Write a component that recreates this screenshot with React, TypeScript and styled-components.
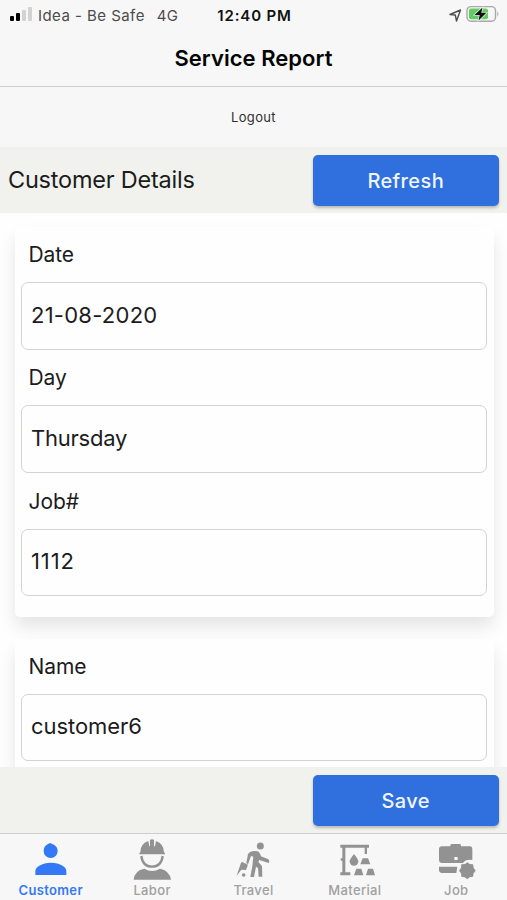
import React from "react";
import styled, { createGlobalStyle } from "styled-components";

const GlobalStyle = createGlobalStyle`
  * { box-sizing: border-box; }
  body { margin: 0; background: #fefefe; font-family: Inter, "Liberation Sans", sans-serif; color: #1c1c1c; }
`;

const Screen = styled.div`
  width: 100%;
  height: 900px;
  display: flex;
  flex-direction: column;
  overflow: hidden;
`;

const StatusBar = styled.div`
  height: 30px;
  display: grid;
  grid-template-columns: 1fr auto 1fr;
  align-items: center;
  padding: 0 8px 0 9px;
  font-size: 15px;
`;

const Carrier = styled.div`
  display: flex;
  align-items: center;
  color: #4c4c4c;
  letter-spacing: 0.45px;
  white-space: pre;
`;

const Signal = styled.svg`
  width: 24px;
  height: 14px;
  margin: -2px 5px 0 0;
`;

const Network = styled.span`
  margin-left: 12px;
  letter-spacing: 0.2px;
`;

const Clock = styled.div`
  padding-left: 1px;
  color: #111;
  font-weight: 600;
  letter-spacing: 0.85px;
`;

const Indicators = styled.div`
  display: flex;
  justify-content: flex-end;
  align-items: center;

  svg {
    margin: -2px -1px 0 0;
  }
`;

const Header = styled.header`
  flex: none;
  height: 87px;
  background: #f7f7f7;
  border-bottom: 1px solid #cfcfcf;
`;

const Title = styled.h1`
  margin: 0;
  height: 56px;
  line-height: 56px;
  text-align: center;
  font-size: 22px;
  font-weight: 600;
  letter-spacing: 0.04px;
  color: #050505;
`;

const LogoutBar = styled.div`
  flex: none;
  height: 60px;
  line-height: 60px;
  text-align: center;
  font-size: 13px;
  letter-spacing: 0.35px;
  background: #f7f7f7;
  color: #303030;
`;

const ActionBar = styled.div`
  flex: none;
  height: 66px;
  display: flex;
  align-items: center;
  justify-content: space-between;
  padding: 0 8px;
  background: #f1f2ed;
`;

const SectionTitle = styled.h2`
  margin: 0;
  font-size: 23.5px;
  line-height: 28px;
  padding-bottom: 1px;
  font-weight: 400;
  letter-spacing: -0.22px;
`;

const Button = styled.button`
  width: 186.5px;
  height: 51px;
  margin-top: 1px;
  margin-left: auto;
  padding: 0;
  border: 0;
  border-radius: 5px;
  background: #2f6fde;
  color: #f0f6ff;
  font: 500 20px Inter, sans-serif;
  letter-spacing: 0.4px;
  box-shadow: 0 2px 3px rgba(0, 0, 0, 0.24);
`;

const Content = styled.main`
  flex: none;
  height: 554px;
  overflow: hidden;
  padding: 14px 13.5px 0 14.5px;
  background: #fefefe;
`;

const Card = styled.section`
  padding: 7px 6.5px 21px;
  margin-bottom: 21.5px;
  border-radius: 5px;
  background: #fefefe;
  box-shadow: 0 10px 18px -1px rgba(0, 0, 0, 0.11);
`;

const Label = styled.label`
  display: block;
  height: 48px;
  padding: 0 7.5px;
  line-height: 41px;
  font-size: 21px;
  letter-spacing: -0.1px;
`;

const Input = styled.input<{ $tracking?: number }>`
  display: block;
  width: 100%;
  height: 67.5px;
  margin-bottom: 7.8px;
  padding: 0 9px 2px;
  border: 1.5px solid #d3d3d3;
  border-radius: 7px;
  background: transparent;
  outline: none;
  color: #1c1c1c;
  font: 400 22px Inter, sans-serif;
  letter-spacing: ${(p) => p.$tracking ?? 0}px;
  &:last-child { margin-bottom: 0; }
`;

const TabBar = styled.nav`
  flex: none;
  height: 67px;
  display: grid;
  grid-template-columns: repeat(5, 1fr);
  border-top: 1px solid #cecece;
  background: #f7f7f7;
`;

const Tab = styled.div<{ $active?: boolean }>`
  display: flex;
  flex-direction: column;
  align-items: center;
  padding-top: 4px;
  color: ${(p) => (p.$active ? "#3478f6" : "#929292")};
`;

const TabIcon = styled.svg`
  width: 40px;
  height: 43px;
  fill: currentColor;
`;

const TabLabel = styled.span<{ $active?: boolean }>`
  line-height: 18px;
  font-size: 13px;
  font-weight: ${(p) => (p.$active ? 600 : 500)};
  letter-spacing: 0.35px;
  color: ${(p) => (p.$active ? "#3478f6" : "#a0a0a0")};
`;

const Field = ({ label, value, tracking }: { label: string; value: string; tracking?: number }) => (
  <>
    <Label>{label}</Label>
    <Input aria-label={label} defaultValue={value} $tracking={tracking} />
  </>
);

const line = { fill: "none", stroke: "currentColor" } as const;

const tabs = [
  {
    label: "Customer",
    active: true,
    icon: (
      <>
        <path d="M57 15L66 19Q80 25 80 39A21 21 0 0 1 38 39Q38 24 51 18Z" />
        <path d="M13 111V99Q13 90 25 83Q40 74 60 74Q80 74 95 83Q106 90 106 99V111Z" />
      </>
    ),
  },
  {
    label: "Labor",
    icon: (
      <>
        <path d="M22 49Q20 46 25 43Q24 18 49 9L52 25H54V5Q60 2 66 5V25H69L72 9Q96 18 96 43Q101 46 99 49Z" />
        <path d="M28 54Q32 86 60 86Q88 86 92 54" {...line} strokeWidth="7" />
        <path d="M5 125Q8 97 37 92Q60 106 84 92Q112 97 117 125Z" />
      </>
    ),
  },
  {
    label: "Travel",
    icon: (
      <>
        <circle cx="82" cy="24" r="10.5" />
        <path d="M51 42Q62 37 73 40Q80 42 84 55L106 64Q111 69 107 75L79 66L76 72L87 84L88 116H77L75 90L69 86L63 117H52L58 84L61 56L54 54L45 79L40 75L45 48Z" />
        <path d="M11 113L24 74L28 72L45 80L39 96L25 95Z" />
        <circle cx="32" cy="111" r="5.5" />
      </>
    ),
  },
  {
    label: "Material",
    icon: (
      <>
        <path d="M16 20H102V29H96V48H89V29H31V103H46V112H16V103H22V68H17V61H22V29H16Z" />
        <path d="M57 48Q70 64 70 70A13 13 0 0 1 44 70Q44 64 57 48Z" />
        <path d="M83 61H99L106 79H76ZM64 92H79L85 112H57ZM99 92H114L120 112H93Z" />
      </>
    ),
  },
  {
    label: "Job",
    icon: (
      <>
        <path fillRule="evenodd" d="M43 25V22Q43 18 48 18H70Q75 18 75 22V25H103Q109 26 109 33V66Q90 62 81 75H16Q9 74 9 66V32Q9 26 16 25ZM55 57V66H65V57Z" />
        <path d="M9 86H64L61 105H16Q9 104 9 97Z" />
        <path d="M94 73L101 78L111 79L113 89L119 98L113 106L111 116L101 118L94 124L86 118L76 116L75 106L69 98L75 89L76 79L87 78Z" />
      </>
    ),
  },
];

export default function App() {
  return (
    <Screen>
      <GlobalStyle />
      <Header>
        <StatusBar>
          <Carrier>
            <Signal viewBox="0 0 24 14">
              <rect x="1" y="9" width="4" height="5" rx="1" />
              <rect x="7" y="6" width="4" height="8" rx="1" />
              <rect x="13" y="3" width="4" height="11" rx="1" fill="#d2d2d2" />
              <rect x="19" y="0" width="4" height="14" rx="1" fill="#d2d2d2" />
            </Signal>
            Idea - Be Safe<Network>4G</Network>
          </Carrier>
          <Clock>12:40 PM</Clock>
          <Indicators>
            <svg width="52" height="18" viewBox="0 0 52 18">
              <path d="M2 9.5L12.5 5L8.5 16L7.3 10Z" fill="none" stroke="#4c4c4c" strokeWidth="1.4" strokeLinejoin="round" />
              <rect x="19" y="1.6" width="28.5" height="14.6" rx="4" fill="none" stroke="#a8a8a8" strokeWidth="1.4" />
              <rect x="21" y="3.6" width="19" height="10.6" rx="2" fill="#62cd62" />
              <path d="M49.3 6.5Q51.5 9 49.3 11.5Z" fill="#a8a8a8" />
              <path d="M34.5 2.5L26.5 10H31.7L30.5 15.5L38.5 7.8H33.3Z" fill="#111" stroke="#f7f7f7" strokeWidth="1.2" paintOrder="stroke" />
            </svg>
          </Indicators>
        </StatusBar>
        <Title>Service Report</Title>
      </Header>
      <LogoutBar>Logout</LogoutBar>
      <ActionBar>
        <SectionTitle>Customer Details</SectionTitle>
        <Button>Refresh</Button>
      </ActionBar>
      <Content>
        <Card>
          <Field label="Date" value="21-08-2020" tracking={0.25} />
          <Field label="Day" value="Thursday" tracking={-0.22} />
          <Field label="Job#" value="1112" tracking={0.9} />
        </Card>
        <Card>
          <Field label="Name" value="customer6" tracking={-0.05} />
        </Card>
      </Content>
      <ActionBar>
        <Button>Save</Button>
      </ActionBar>
      <TabBar>
        {tabs.map((t) => (
          <Tab key={t.label} $active={t.active}>
            <TabIcon viewBox="0 0 120 129">{t.icon}</TabIcon>
            <TabLabel $active={t.active}>{t.label}</TabLabel>
          </Tab>
        ))}
      </TabBar>
    </Screen>
  );
}
